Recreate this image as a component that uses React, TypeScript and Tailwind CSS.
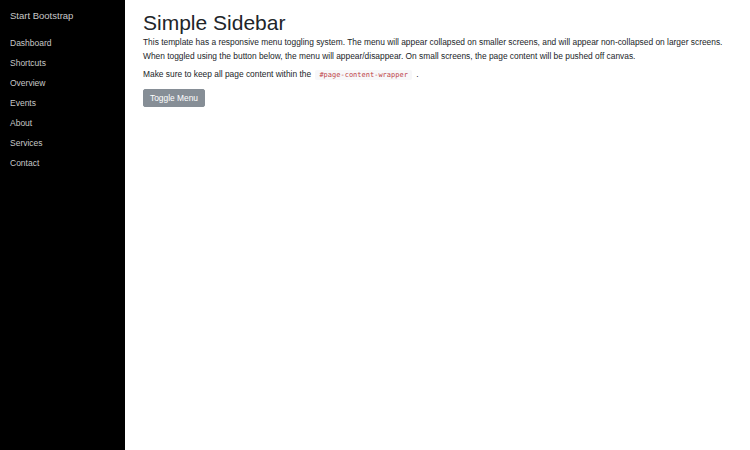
const links = ["Dashboard", "Shortcuts", "Overview", "Events", "About", "Services", "Contact"];

export default function App() {
  return (
    <div className="flex h-[450px] w-[750px] bg-white font-['Liberation_Sans',Arial,sans-serif]">
      <aside className="w-[125px] shrink-0 bg-black">
        <div className="pl-[10px] pt-[9px] text-[9.5px] leading-[14px] text-[#c8c8c8]">Start Bootstrap</div>
        <ul className="mt-[10px]">
          {links.map((l) => (
            <li key={l} className="pl-[10px] text-[8.5px] leading-[20px] text-[#c8c8c8]">
              {l}
            </li>
          ))}
        </ul>
      </aside>
      <main className="flex-1 pl-[18px] pr-[15px] pt-[9px] text-[#212529]">
        <h1 className="text-[21px] font-medium leading-[27px]">Simple Sidebar</h1>
        <p className="text-[8.4px] leading-[13.5px]">
          This template has a responsive menu toggling system. The menu will appear collapsed on smaller screens, and will appear non-collapsed on larger screens. When toggled using the button below, the menu will appear/disappear. On small screens, the page content will be pushed off canvas.
        </p>
        <p className="mt-[5px] text-[8.4px] leading-[13.5px]">
          Make sure to keep all page content within the{" "}
          <code className="mx-[2px] rounded-[2px] bg-[#f7f7f9] px-[4px] py-[1px] font-['DejaVu_Sans_Mono',monospace] text-[7px] text-[#bd4147]">
            #page-content-wrapper
          </code>{" "}
          .
        </p>
        <button className="mt-[6px] rounded-[2px] border border-[#868e96] bg-[#868e96] px-[6px] text-[8.4px] font-medium leading-[16px] text-white">
          Toggle Menu
        </button>
      </main>
    </div>
  );
}
